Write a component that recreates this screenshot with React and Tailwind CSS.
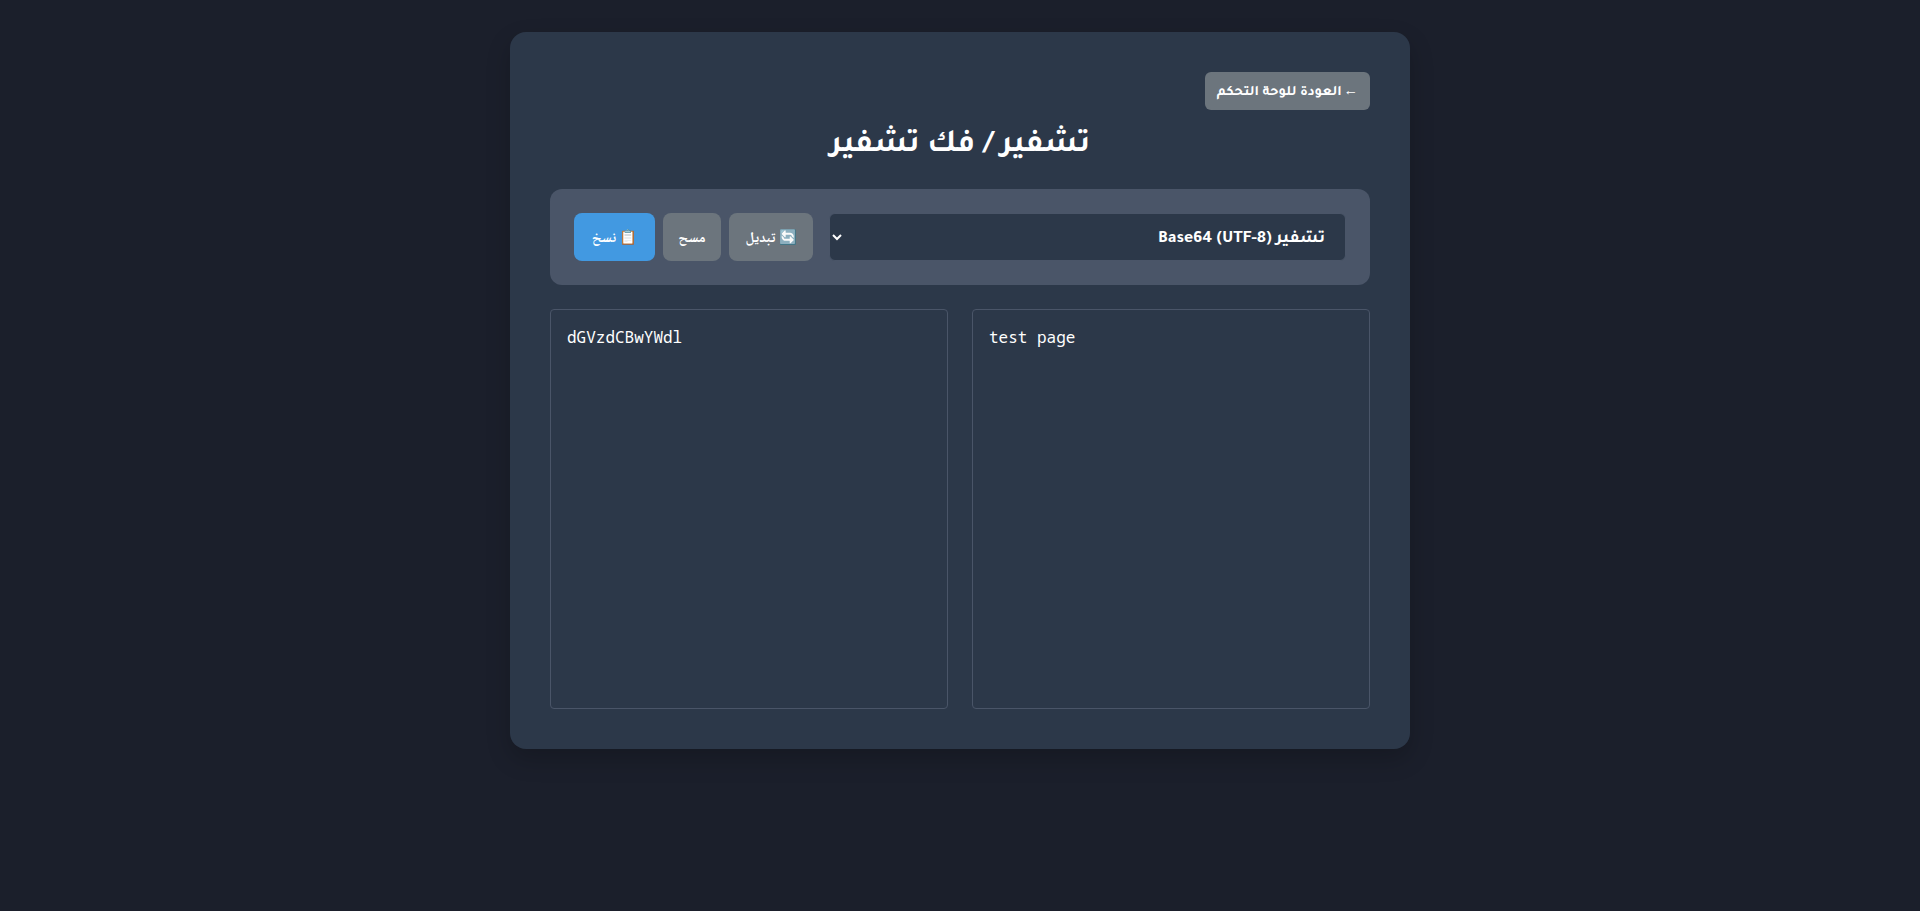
import { useState } from 'react';

const App = () => {
  const [mode, setMode] = useState('b64-enc');

  return (
    <div dir="rtl" className="min-h-[911px] bg-[#1b1f2b] text-white font-['Tajawal','Liberation_Sans',sans-serif]">
      <div className="flex justify-center pt-8">
        <div className="w-[900px] rounded-2xl bg-[#2c3849] p-10 shadow-[0_10px_25px_rgba(0,0,0,0.2)]">
          <div>
            <a href="#" className="inline-block rounded-md bg-[#6c757d] px-3 pt-[10px] pb-[6px] text-[14.4px] font-bold leading-[22px]">
              <span className="-ml-[1.5px] inline-block">←</span> العودة للوحة التحكم
            </a>
          </div>
          <h1 className="mt-[13px] mb-[19px] text-center text-[32px] font-bold leading-[47px]">تشفير / فك تشفير</h1>

          <div className="flex items-center gap-4 rounded-xl bg-[#4a5568] p-6">
            <select
              value={mode}
              onChange={(e) => setMode(e.target.value)}
              className="h-12 flex-1 rounded-md border border-[#4a5568] bg-[#2c3849] px-4 pt-[5px] text-[17.6px] font-bold text-white"
            >
              <option value="b64-enc">تشفير Base64 (UTF-8)</option>
              <option value="b64-dec">فك تشفير Base64 (UTF-8)</option>
            </select>
            <div className="flex gap-2 font-['Noto_Naskh_Arabic',serif] text-[14.4px] font-bold">
              <button className="h-12 w-[84px] rounded-lg bg-[#6c757d] pt-1.5">🔄 تبديل</button>
              <button className="h-12 w-[58px] rounded-lg bg-[#6c757d] pt-1.5">مسح</button>
              <button className="h-12 w-[81px] rounded-lg bg-[#4299e1] pt-1.5">📋 نسخ</button>
            </div>
          </div>

          <div className="mt-6 grid grid-cols-2 gap-6">
            <textarea
              dir="ltr"
              readOnly
              value="test page"
              className="h-[400px] resize-none rounded border border-[#4a5568] bg-[#2c3849] px-4 pt-[15px] pb-4 font-['Noto_Sans_Mono',monospace] text-base text-white outline-none"
            />
            <textarea
              dir="ltr"
              readOnly
              value="dGVzdCBwYWdl"
              className="h-[400px] resize-none rounded border border-[#4a5568] bg-[#2c3849] px-4 pt-[15px] pb-4 font-['Noto_Sans_Mono',monospace] text-base text-white outline-none"
            />
          </div>
        </div>
      </div>
    </div>
  );
};

export default App;
